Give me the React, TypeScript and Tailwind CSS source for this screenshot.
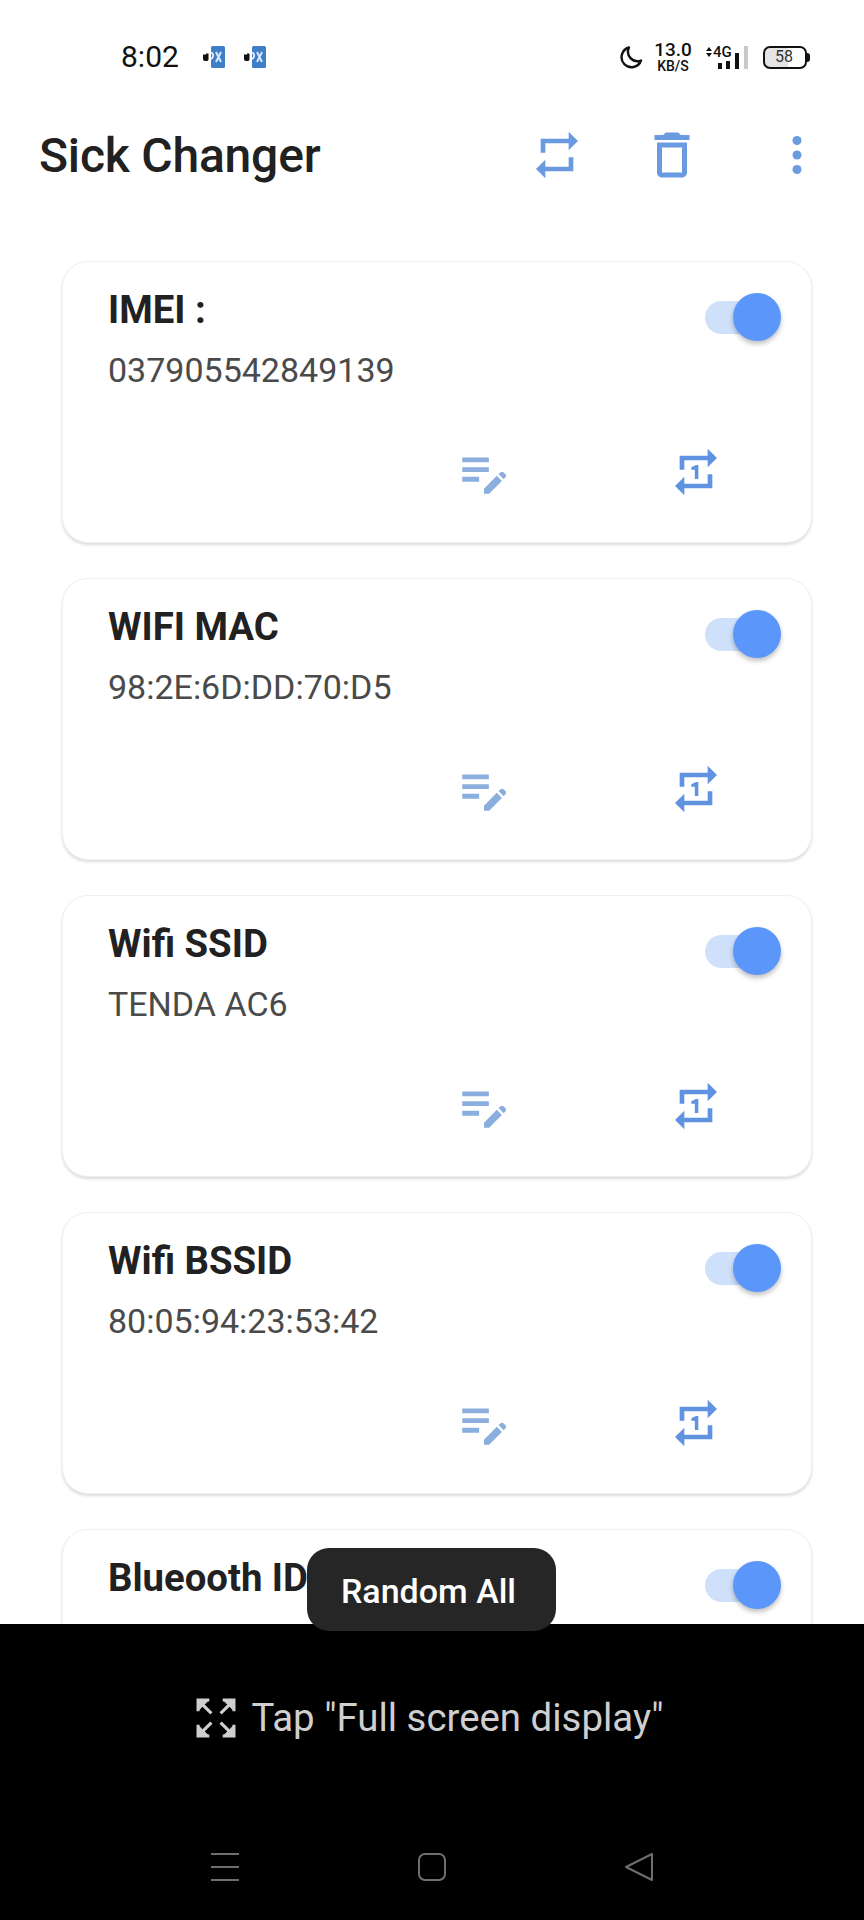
const cards = [
  { title: "IMEI :", value: "037905542849139" },
  { title: "WIFI MAC", value: "98:2E:6D:DD:70:D5" },
  { title: "Wifi SSID", value: "TENDA AC6" },
  { title: "Wifi BSSID", value: "80:05:94:23:53:42" },
  { title: "Blueooth ID", value: "" },
];

function NotifIcon() {
  return (
    <svg width="24" height="24" viewBox="0 0 24 24">
      <rect x="9" y="1" width="14" height="22" rx="1.5" fill="#3f7fc9" />
      <path d="M14 7l5 10M19 7l-5 10" stroke="#d6e8fa" strokeWidth="2" />
      <path d="M1 9.5h3v-1h2.5v6a2 2 0 0 1-2 1.5H3a2 2 0 0 1-2-2z" fill="#111" />
      <path d="M9 7.5c1.6.4 2.5 2 2 4-.3 1.300-1 2-2 2.500" stroke="#fff" strokeWidth="1.600" fill="none" />
    </svg>
  );
}

function StatusBar() {
  return (
    <div className="h-[114px] shrink-0 flex items-center pl-[121px] pr-[54px] text-[#111]">
      <span className="text-[30px] leading-none">8:02</span>
      <div className="ml-[23px] flex gap-[17px]">
        <NotifIcon />
        <NotifIcon />
      </div>
      <div className="ml-auto flex items-center">
        <svg width="24" height="24" viewBox="0 0 24 24">
          <path d="M10 2.500a10 10 0 1 0 12 13 9.500 9.500 0 0 1-12-13z" fill="none" stroke="#111" strokeWidth="2.400" strokeLinejoin="round" />
        </svg>
        <div className="ml-[11px] w-[38px] flex flex-col items-center font-medium">
          <span className="text-[19px] leading-[18px]">13.0</span>
          <span className="text-[14px] leading-[14px]">KB/S</span>
        </div>
        <svg className="ml-[11px]" width="46" height="26" viewBox="0 0 46 26">
          <path d="M3 7l3-4 3 4zM3 9l3 4 3-4z" fill="#111" />
          <text x="10" y="13" fontSize="15" fontWeight="500" fill="#111" fontFamily="Roboto, sans-serif">4G</text>
          <rect x="15" y="19" width="4" height="6" fill="#111" />
          <rect x="23" y="17" width="4" height="8" fill="#111" />
          <rect x="32" y="9" width="4" height="16" fill="#111" />
          <rect x="41" y="2" width="4" height="23" fill="#c8c8c8" />
        </svg>
        <div className="ml-[14px] w-[44px] h-[23px] rounded-[7px] border-2 border-[#111] flex items-center pl-[10px] bg-[linear-gradient(90deg,#e4e4e4_58%,#fff_58%)]">
          <span className="text-[16px] leading-none text-[#333]">58</span>
        </div>
        <div className="w-[3px] h-[9px] bg-[#111] rounded-r-sm" />
      </div>
    </div>
  );
}

function Header() {
  return (
    <div className="h-[82px] shrink-0 flex items-center pl-[39px] pr-[38px]">
      <h1 className="pt-[2px] text-[48px] leading-none font-medium text-[#212121] tracking-[-0.2px]">Sick Changer</h1>
      <div className="ml-auto flex items-center text-[#6a9be0]">
        <svg width="56" height="56" viewBox="0 0 24 24" fill="currentColor">
          <path d="M7 7h10v3l4-4-4-4v3H5v6h2V7zm10 10H7v-3l-4 4 4 4v-3h12v-6h-2v4z" />
        </svg>
        <svg className="ml-[57px]" width="60" height="60" viewBox="0 0 24 24" fill="currentColor">
          <path d="M6 19c0 1.100.9 2 2 2h8c1.100 0 2-.9 2-2V7H6v12zM8 9h8v10H8V9zm7.500-5l-1-1h-5l-1 1H5v2h14V4z" />
        </svg>
        <svg className="ml-[66px]" width="58" height="58" viewBox="0 0 58 58" fill="currentColor">
          <circle cx="29" cy="14.500" r="4.500" />
          <circle cx="29" cy="29" r="4.500" />
          <circle cx="29" cy="43.500" r="4.500" />
        </svg>
      </div>
    </div>
  );
}

function Toggle() {
  return (
    <div className="relative w-[65px] h-[33px] rounded-full bg-[#cfe0fa]">
      <div className="absolute right-[-11px] top-[-8px] w-[48px] h-[48px] rounded-full bg-[#5b97fa] shadow-[0_3px_5px_rgba(0,0,0,0.25)]" />
    </div>
  );
}

function Card({ title, value }: { title: string; value: string }) {
  return (
    <div className="h-[282px] shrink-0 rounded-[26px] bg-white border border-[#f0f0f0] shadow-[0_2px_3px_rgba(0,0,0,0.14)] flex flex-col pl-[45px] pr-[41px]">
      <div className="flex items-start justify-between pt-[27px]">
        <div>
          <div className="text-[38.3px] leading-[42px] font-bold text-[#212121] h-[42px] whitespace-nowrap">{title}</div>
          <div className="mt-[19px] text-[34px] leading-[40px] text-[#4a4a4a] h-[40px]">{value}</div>
        </div>
        <div className="mt-[12px]">
          <Toggle />
        </div>
      </div>
      <div className="mt-[53px] flex items-center justify-end pr-[46px]">
        <svg width="58" height="58" viewBox="0 0 24 24" fill="#8aaedd">
          <path d="M3 10h11v2H3v-2zm0-2h11V6H3v2zm0 8h7v-2H3v2zm15.010-3.130.71-.71c.39-.39 1.020-.39 1.410 0l.71.71c.39.39.39 1.020 0 1.410l-.71.71-2.120-2.120zm-.71.71-5.300 5.300V21h2.120l5.300-5.300-2.120-2.120z" />
        </svg>
        <svg className="ml-[155px]" width="56" height="56" viewBox="0 0 24 24" fill="#5f93e2">
          <path d="M7 7h10v3l4-4-4-4v3H5v6h2V7zm10 10H7v-3l-4 4 4 4v-3h12v-6h-2v4zm-4-2V9h-1l-2 1v1h1.500v4H13z" />
        </svg>
      </div>
    </div>
  );
}

function FullscreenHint() {
  return (
    <div className="pt-[72px] pr-[4px] flex items-center justify-center text-[#cfcfcf]">
      <svg width="40" height="40" viewBox="0 0 39 39" fill="none" stroke="currentColor" strokeWidth="3">
        <path d="M2 13V2h11" />
        <path d="M37 13V2H26" />
        <path d="M2 26v11h11" />
        <path d="M37 26v11H26" />
        <path d="M3 3l12 12M36 3L24 15M3 36l12-12M36 36L24 24" />
        <path d="M3 3h9L3 12zM36 3h-9l9 9zM3 36h9l-9-9zM36 36h-9l9-9z" fill="currentColor" stroke="none" />
      </svg>
      <span className="ml-[15px] text-[38.4px] leading-[44px]">Tap "Full screen display"</span>
    </div>
  );
}

function NavBar() {
  return (
    <div className="mt-[112px] pl-[210px] flex items-center text-[#6e6e6e]">
      <svg width="30" height="30" viewBox="0 0 30 30" stroke="currentColor" strokeWidth="2">
        <path d="M1 2h28M1 15h28M1 28h28" />
      </svg>
      <svg className="ml-[177px]" width="30" height="30" viewBox="0 0 30 30" fill="none" stroke="currentColor" strokeWidth="2">
        <rect x="2" y="2" width="26" height="26" rx="6" />
      </svg>
      <svg className="ml-[177px]" width="30" height="30" viewBox="0 0 30 30" fill="none" stroke="currentColor" strokeWidth="2" strokeLinejoin="round">
        <path d="M28 2v26L2 15z" />
      </svg>
    </div>
  );
}

export default function App() {
  return (
    <div className="relative h-[1920px] w-[864px] overflow-hidden bg-white flex flex-col [font-family:Roboto,sans-serif]">
      <div className="h-[1624px] shrink-0 overflow-hidden flex flex-col">
        <StatusBar />
        <Header />
        <div className="pt-[65px] pl-[62px] pr-[52px] flex flex-col gap-[35px]">
          {cards.map((c) => (
            <Card key={c.title} title={c.title} value={c.value} />
          ))}
        </div>
      </div>
      <div className="flex-1 bg-black">
        <FullscreenHint />
        <NavBar />
      </div>
      {/* toast */}
      <div className="absolute left-[307px] top-[1548px] w-[249px] h-[83px] rounded-[22px] bg-[#262626] flex items-center justify-center pr-[6px] pt-[3px] text-white text-[34px] font-medium">
        Random All
      </div>
    </div>
  );
}
